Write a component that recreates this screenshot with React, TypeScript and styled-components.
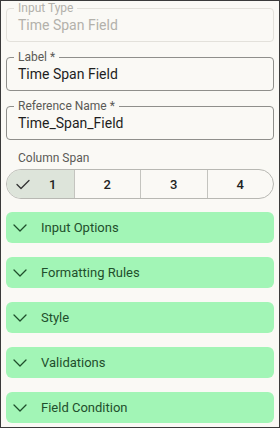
import React from "react";
import styled, { createGlobalStyle } from "styled-components";

const Global = createGlobalStyle`
  html, body { margin: 0; padding: 0; background: #faf9f5; }
  * { box-sizing: border-box; }
  body { font-family: Roboto, "Noto Sans", Arial, sans-serif; }
`;

const Frame = styled.div`
  width: 280px;
  height: 428px;
  border: 1px solid #3a3a3a;
  background: #faf9f5;
  padding: 0 5px;
  display: flex;
  flex-direction: column;
  overflow: hidden;
`;

const Fields = styled.div`
  display: flex;
  flex-direction: column;
  gap: 8px;
`;

const Field = styled.fieldset<{ $disabled?: boolean }>`
  margin: 0;
  padding: 0 7px 6px;
  border: 1px solid ${(p) => (p.$disabled ? "#e3e1db" : "#8f8f8b")};
  border-radius: 4px;
  min-width: 0;
`;

const Legend = styled.legend<{ $disabled?: boolean }>`
  font-size: 12px;
  line-height: 14px;
  padding: 0 4px;
  color: ${(p) => (p.$disabled ? "#b3b1ab" : "#5a5a56")};
`;

const Value = styled.div<{ $disabled?: boolean }>`
  font-size: 14px;
  line-height: 20px;
  padding-left: 4px;
  color: ${(p) => (p.$disabled ? "#b3b1ab" : "#1e1e1e")};
`;

const SpanLabel = styled.div`
  margin-top: 11px;
  padding-left: 12px;
  font-size: 12px;
  line-height: 14px;
  color: #5a5a56;
`;

const Segments = styled.div`
  margin-top: 4px;
  height: 30px;
  border: 1px solid #b8b8b3;
  border-radius: 15px;
  display: grid;
  grid-template-columns: repeat(4, 1fr);
  overflow: hidden;
`;

const Segment = styled.div<{ $selected?: boolean }>`
  display: flex;
  align-items: center;
  justify-content: ${(p) => (p.$selected ? "flex-start" : "center")};
  gap: 19px;
  padding-left: ${(p) => (p.$selected ? "9px" : "0")};
  background: ${(p) => (p.$selected ? "#dde4da" : "transparent")};
  font-size: 13px;
  font-weight: 500;
  color: #222;
  & + & {
    border-left: 1px solid #c4c4bf;
  }
`;

const Accordions = styled.div`
  margin-top: 13px;
  display: flex;
  flex-direction: column;
  gap: 14px;
`;

const Accordion = styled.div`
  height: 31px;
  border-radius: 6px;
  background: #a2f5b6;
  display: flex;
  align-items: center;
  padding-left: 7px;
  gap: 14px;
  font-size: 13px;
  color: #1f4f2c;
`;

const Chevron = () => (
  <svg width="14" height="8" viewBox="0 0 14 8" fill="none">
    <polyline points="1,1 7,7 13,1" stroke="#1f4f2c" strokeWidth="1.3" strokeLinecap="round" strokeLinejoin="round" />
  </svg>
);

const Check = () => (
  <svg width="14" height="11" viewBox="0 0 14 11" fill="none">
    <polyline points="1,5.5 5,9.5 13,1.5" stroke="#333" strokeWidth="1.3" strokeLinecap="round" strokeLinejoin="round" />
  </svg>
);

const sections = ["Input Options", "Formatting Rules", "Style", "Validations", "Field Condition"];

export default function App() {
  return (
    <>
      <Global />
      <Frame>
        <Fields>
          <Field $disabled>
            <Legend $disabled>Input Type</Legend>
            <Value $disabled>Time Span Field</Value>
          </Field>
          <Field>
            <Legend>Label *</Legend>
            <Value>Time Span Field</Value>
          </Field>
          <Field>
            <Legend>Reference Name *</Legend>
            <Value>Time_Span_Field</Value>
          </Field>
        </Fields>
        <SpanLabel>Column Span</SpanLabel>
        <Segments>
          <Segment $selected>
            <Check />
            <span>1</span>
          </Segment>
          <Segment>2</Segment>
          <Segment>3</Segment>
          <Segment>4</Segment>
        </Segments>
        <Accordions>
          {sections.map((s) => (
            <Accordion key={s}>
              <Chevron />
              <span>{s}</span>
            </Accordion>
          ))}
        </Accordions>
      </Frame>
    </>
  );
}
